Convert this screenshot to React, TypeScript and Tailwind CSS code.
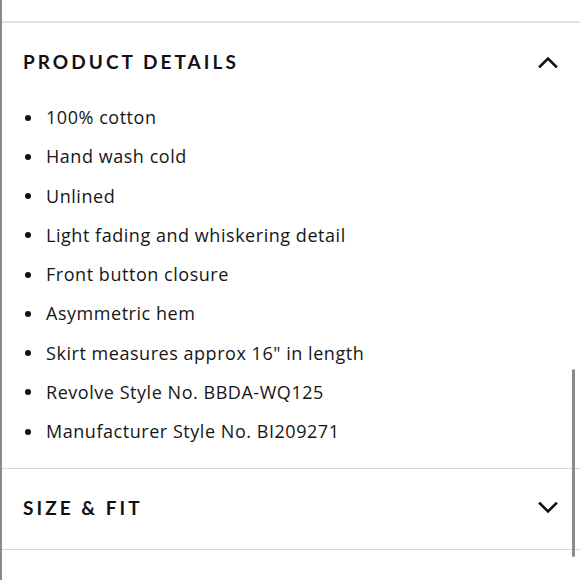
const details = [
  "100% cotton",
  "Hand wash cold",
  "Unlined",
  "Light fading and whiskering detail",
  "Front button closure",
  "Asymmetric hem",
  'Skirt measures approx 16" in length',
  "Revolve Style No. BBDA-WQ125",
  "Manufacturer Style No. BI209271",
];

function Chevron({ up }: { up?: boolean }) {
  return (
    <svg width="20" height="12" viewBox="0 0 20 12" fill="none" stroke="#111" strokeWidth="2.6" strokeLinecap="square">
      {up ? <path d="M2 10.5 L10 2.5 L18 10.5" /> : <path d="M2 1.5 L10 9.5 L18 1.5" />}
    </svg>
  );
}

export default function App() {
  return (
    <div className="relative w-[580px] h-[580px] overflow-hidden bg-white border-l-2 border-[#8a8a8a] text-[#111]">
      <div className="h-[21px]" />
      <div className="border-t-2 border-[#e2e2e2]">
        <div className="flex items-center justify-between h-[75px] pl-[21px] pr-[22px] pt-[2px]">
          <h2 className="font-['Lato',sans-serif] text-[19px] font-bold tracking-[0.16em] leading-none">PRODUCT DETAILS</h2>
          <Chevron up />
        </div>
        <ul className="pb-[17px] font-['Open_Sans',sans-serif]">
          {details.map((d) => (
            <li key={d} className="flex items-center h-[39.25px] pl-[23px] text-[18px] tracking-[0.03em] text-[#161616]">
              <span className="w-[6px] h-[6px] rounded-full bg-[#111] mr-[15px]" />
              {d}
            </li>
          ))}
        </ul>
      </div>
      <div className="border-t border-[#d6d6d6]">
        <div className="flex items-center justify-between h-[80px] pl-[21px] pr-[22px] pb-[3px]">
          <h2 className="font-['Lato',sans-serif] text-[19px] font-bold tracking-[0.16em] leading-none">SIZE &amp; FIT</h2>
          <Chevron />
        </div>
      </div>
      <div className="border-t border-[#d6d6d6] h-[40px]" />
      <div className="absolute right-[5px] top-[369px] w-[3px] h-[188px] rounded-full bg-[#8a8a8a]" />
    </div>
  );
}
